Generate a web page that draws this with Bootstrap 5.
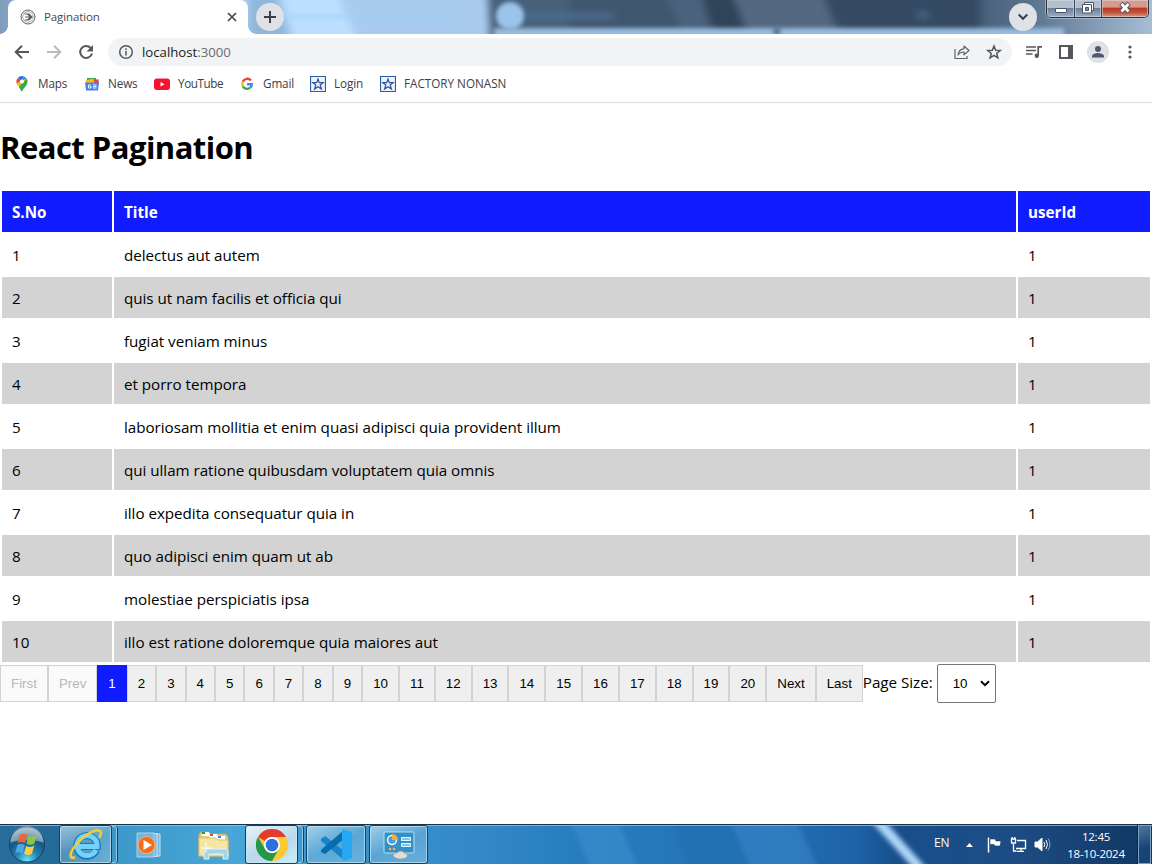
<!DOCTYPE html>
<html lang="en">
<head>
<meta charset="utf-8">
<meta name="viewport" content="width=device-width, initial-scale=1">
<title>Pagination</title>
<link href="https://cdn.jsdelivr.net/npm/bootstrap@5.3.0/dist/css/bootstrap.min.css" rel="stylesheet">
<style>
  body { width: 1152px; height: 864px; overflow: hidden; background: #fff; color: #000; font-family: "Open Sans", "Noto Sans", sans-serif; font-size: 15.2px; line-height: 21px; letter-spacing: -.03px; }
  svg { display: block; flex: none; }
  .strip { height: 34px; }
  .wallpaper { left: 0; top: 0; z-index: -1; }
  .strip, .taskbar { isolation: isolate; }
  .tab { width: 240px; height: 34px; margin-left: 8px; background: #fff; border-radius: 8px 8px 0 0; font-size: 11.5px; letter-spacing: -.12px; color: #45494d; padding: 0 8px 0 12px; }
  .tab::before, .tab::after { content: ""; position: absolute; bottom: 0; width: 8px; height: 8px; }
  .tab::before { left: -8px; background: radial-gradient(circle at 0 0, transparent 7.5px, #fff 8px); }
  .tab::after { right: -8px; background: radial-gradient(circle at 100% 0, transparent 7.5px, #fff 8px); }
  .tab span { margin-top: -2px; }
  .disc { width: 28px; height: 28px; background: #dee1e6; }
  .winbtns { width: 103px; height: 18px; border: 1px solid #29333f; border-top: 0; border-radius: 0 0 5px 5px; box-shadow: 0 0 0 1px #b8cbdf99; overflow: hidden; margin: 0 3px 0 9px; }
  .wb { background: linear-gradient(#b3bfcd 0 45%, #6c7f95 50%, #9db1c6); border-right: 1px solid #39475a; box-shadow: inset 0 0 0 1px #d5dfe988; }
  .wb-close { background: linear-gradient(#d79a8c 0 40%, #b93a20 50%, #c3573b 75%, #dc9882); border-right: 0; }
  .toolbar { height: 36px; padding: 0 6px; }
  .ico { width: 32px; height: 28px; }
  .omni { height: 28px; background: #f1f3f4; margin: 0 6px; padding: 0 2px; font-size: 13.2px; letter-spacing: 0; color: #202124; }
  .omni .port { color: #696d72; }
  .marks { height: 33px; border-bottom: 1px solid #dadce0; padding: 0 0 5px 14px; font-size: 11.7px; letter-spacing: -.1px; color: #3c4043; white-space: nowrap; }
  .marks > div { gap: 8px; }
  .tight { letter-spacing: -.4px; }
  h1 { font-size: 31px; line-height: 43px; font-weight: 700; letter-spacing: -.53px; margin: 23px 0 20px; }
  .grid-tbl { width: 1152px; border-collapse: separate; border-spacing: 2px; table-layout: fixed; margin: 0; }
  .grid-tbl th, .grid-tbl td { padding: 11px 10px 9px; height: 41px; line-height: 21px; }
  .grid-tbl th { background: #101cff; color: #fff; font-size: 15.2px; font-weight: 700; letter-spacing: 0; }
  .grid-tbl tbody tr:nth-child(even) td { background: #d3d3d3; }
  .pager { height: 37px; margin-top: 1px; }
  .pg { font: 13.333px/15px "Liberation Sans", Arial, sans-serif; letter-spacing: 0; padding: 10px; height: 37px; border: 1px solid #d3d3d3; background: #efefef; color: #000; border-radius: 0; }
  .pg:disabled { color: #b8b8b8; background: #fafafa; }
  .pg.current { background: #101cff; border-color: #101cff; color: #fff; }
  .size-label { padding-bottom: 2px; }
  .size-box { width: 59px; height: 39px; border: 1px solid #767676; border-radius: 2px; margin-left: 4px; padding: 0 5px 0 15px; font-size: 13.333px; letter-spacing: 0; font-family: "Liberation Sans", Arial, sans-serif; }
  .taskbar { height: 40px; left: 0; bottom: 0; width: 1152px; padding-top: 1px; }
  .tk { height: 39px; border: 1px solid #153f60; border-radius: 3px; box-shadow: inset 0 0 0 1px #cdeafaa8; background: linear-gradient(155deg, #d5ebf8aa, #8fc3df66 50%, #b3dff466); }
  .stacked { width: 53px; margin-right: 5px; }
  .stacked::after { content: ""; position: absolute; left: 52px; top: 0; width: 5px; height: 37px; border: 1px solid #cdeafa99; border-left: 0; box-shadow: 1px 0 #153f60; border-radius: 0 3px 3px 0; }
  .lit { background: linear-gradient(155deg, #e9f2f8, #b9d8e9 55%, #c9eef8); }
  .tray { color: #fff; font-size: 11.5px; line-height: 17px; letter-spacing: -.25px; }
  .peek { width: 13px; height: 39px; border: 1px solid #7ba0c3; box-shadow: -1px 0 #0b2748; background: linear-gradient(160deg, #7d9fbf99, #164477 60%); }
</style>
<script src="https://cdn.jsdelivr.net/npm/bootstrap@5.3.0/dist/js/bootstrap.bundle.min.js"></script>
</head>
<body class="position-relative">

<header>
  <div class="strip d-flex align-items-center position-relative">
    <svg class="wallpaper position-absolute" width="1152" height="34" viewBox="0 0 1152 34">
      <defs>
        <linearGradient id="sky" x2="1" y2="0"><stop offset="0" stop-color="#7e9dbb"/><stop offset=".05" stop-color="#9fc2e4"/><stop offset=".24" stop-color="#b4d8fa"/><stop offset=".41" stop-color="#a9cdf0"/><stop offset=".43" stop-color="#516b87"/><stop offset=".8" stop-color="#354b64"/><stop offset=".89" stop-color="#58718b"/><stop offset="1" stop-color="#a6bdd4"/></linearGradient>
        <filter id="b3" filterUnits="userSpaceOnUse" x="0" y="-20" width="1152" height="80" color-interpolation-filters="sRGB"><feGaussianBlur stdDeviation="4 2"/></filter>
        <filter id="b2" filterUnits="userSpaceOnUse" x="0" y="-20" width="1152" height="80" color-interpolation-filters="sRGB"><feGaussianBlur stdDeviation="2"/></filter>
      </defs>
      <rect width="1152" height="34" fill="url(#sky)"/>
      <g filter="url(#b3)">
        <path d="M248 -15h26l18 60h-44z" fill="#91b6da"/>
        <path d="M281 -15h50l32 60h-66z" fill="#bcdfff"/>
        <path d="M334 -15h151l5 60h-130z" fill="#a8cbee"/>
        <path d="M492 -15h170l24 60H492z" fill="#48607a"/>
        <path d="M570 -15h90l28 60H570z" fill="#3f566f"/>
        <path d="M662 -15h38l24 60h-38z" fill="#4a627b"/>
        <path d="M698 -15h32l24 60h-36z" fill="#2f4459"/>
        <path d="M728 -15h91l24 60h-91z" fill="#52697f"/>
        <path d="M821 -15h159v60H843z" fill="#344a63"/>
        <path d="M524 11h90v10h-90zM918 10h10v10h-10z" fill="#4d6f8f" opacity=".6"/>
      </g>
      <circle cx="510" cy="16" r="14" fill="#9bc4ec" filter="url(#b2)"/>
      <path d="M494 28h570v16H494z" fill="#98bbdf" filter="url(#b2)"/>
      <path d="M774 27h6v9h-6z" fill="#526f8f" filter="url(#b2)"/>
      <path d="M290 15h160v3H290z" fill="#9fd3f8" filter="url(#b2)"/>
    </svg>
    <div class="tab d-flex align-items-center position-relative">
      <svg width="16" height="16" viewBox="0 0 16 16" fill="none" stroke="#5d6063"><circle cx="8" cy="8" r="7"/><circle cx="8" cy="8" r="5.300" stroke-width=".7" stroke="#888"/><path d="M4.500 5h3l3 3-3 3h-3M5 8h5M7.500 5h1.500l3 3-3 3H7.500" stroke-width="1.200"/></svg>
      <span class="ms-2">Pagination</span>
      <svg class="ms-auto" width="16" height="16" viewBox="0 0 16 16" stroke="#45494d" stroke-width="1.700"><path d="M4 4l8 8M12 4l-8 8"/></svg>
    </div>
    <div class="disc rounded-circle d-flex align-items-center justify-content-center ms-2">
      <svg width="14" height="14" viewBox="0 0 14 14" stroke="#3c4043" stroke-width="2"><path d="M7 1v12M1 7h12"/></svg>
    </div>
    <div class="disc rounded-circle d-flex align-items-center justify-content-center ms-auto">
      <svg width="12" height="8" viewBox="0 0 12 8" fill="none" stroke="#3c4043" stroke-width="2"><path d="M1.700 1.500L6 5.800l4.300-4.300"/></svg>
    </div>
    <div class="winbtns d-flex align-self-start">
      <div class="wb d-flex justify-content-center" style="width:28px"><svg width="28" height="18" viewBox="0 0 28 18"><rect x="8.500" y="8.500" width="11" height="4" rx=".5" fill="#fff" stroke="#4b5567"/></svg></div>
      <div class="wb d-flex justify-content-center" style="width:27px"><svg width="26" height="18" viewBox="0 0 26 18" fill="#fff" stroke="#4b5567"><path d="M9.500 2.500h9v8h-9z"/><path d="M7.500 4.500h9v8.500h-9z"/><path d="M10.500 7.500h3v3h-3z" fill="#8292a5"/></svg></div>
      <div class="wb wb-close flex-fill d-flex justify-content-center"><svg width="26" height="18" viewBox="0 0 26 18"><path d="M9 3.500l8 8.500M17 3.500L9 12" stroke="#5a5060" stroke-width="4.800"/><path d="M9.500 4l7 7.500M16.500 4l-7 7.500" stroke="#fff" stroke-width="2.800"/></svg></div>
    </div>
  </div>

  <div class="toolbar d-flex align-items-center">
    <div class="ico d-flex align-items-center justify-content-center"><svg width="16" height="16" viewBox="0 0 16 16" fill="none" stroke="#54585d" stroke-width="2"><path d="M15 8H2.500M8 1.700L1.700 8 8 14.300"/></svg></div>
    <div class="ico d-flex align-items-center justify-content-center"><svg width="16" height="16" viewBox="0 0 16 16" fill="none" stroke="#babcbe" stroke-width="2"><path d="M1 8h12.500M8 1.700L14.300 8 8 14.300"/></svg></div>
    <div class="ico d-flex align-items-center justify-content-center"><svg width="16" height="16" viewBox="0 0 16 16"><path d="M12.700 4A6 6 0 1 0 14 9.500" fill="none" stroke="#54585d" stroke-width="2"/><path d="M15 1v6.500H8.500z" fill="#54585d"/></svg></div>
    <div class="omni rounded-pill d-flex align-items-center flex-fill">
      <div class="ico d-flex align-items-center justify-content-center"><svg width="16" height="16" viewBox="0 0 16 16" fill="none" stroke="#54585d" stroke-width="1.500"><circle cx="8" cy="8" r="6.300"/><path d="M8 7v4.500M8 4.300v1.600"/></svg></div>
      <span>localhost<span class="port">:3000</span></span>
      <div class="ico d-flex align-items-center justify-content-center ms-auto"><svg width="18" height="16" viewBox="0 0 18 16" fill="none" stroke="#5f6368" stroke-width="1.200"><path d="M2 5v9.500h12V12"/><path d="M5 11c.5-4 2.700-6 6-6.200V2l5 4.500-5 4.300V8c-2.800 0-4.600.8-6 3z" stroke-linejoin="round"/></svg></div>
      <div class="ico d-flex align-items-center justify-content-center"><svg width="16" height="16" viewBox="0 0 16 16" fill="none" stroke="#54585d" stroke-width="1.500"><path d="M8 2l1.700 4.200 4.500.3-3.500 2.900 1.200 4.400L8 11.300l-3.900 2.500 1.200-4.400-3.500-2.900 4.500-.3z"/></svg></div>
    </div>
    <div class="ico d-flex align-items-center justify-content-center"><svg width="16" height="14" viewBox="0 0 16 14" fill="none" stroke="#54585d" stroke-width="1.700"><path d="M0 2h10M0 5.500h10M0 9h6.500M12.200 10.500V1.800H16"/><circle cx="10.800" cy="10.700" r="2.200" fill="#54585d" stroke="none"/></svg></div>
    <div class="ico d-flex align-items-center justify-content-center"><svg width="14" height="14" viewBox="0 0 14 14"><path d="M1 1h12v12H1z" fill="none" stroke="#54585d" stroke-width="2"/><path d="M9 1h4v12H9z" fill="#54585d"/></svg></div>
    <div class="ico d-flex align-items-center justify-content-center"><svg width="22" height="22" viewBox="0 0 22 22"><circle cx="11" cy="11" r="11" fill="#dee1e6"/><g fill="#50596b"><circle cx="11" cy="8" r="3"/><path d="M5 16.500v-1.500c0-2 4-3 6-3s6 1 6 3v1.500z"/></g></svg></div>
    <div class="ico d-flex align-items-center justify-content-center"><svg width="4" height="14" viewBox="0 0 4 14" fill="#54585d"><circle cx="2" cy="2" r="1.600"/><circle cx="2" cy="7" r="1.600"/><circle cx="2" cy="12" r="1.600"/></svg></div>
  </div>

  <div class="marks d-flex align-items-center">
    <div class="d-flex align-items-center" style="width:70px"><svg width="16" height="16" viewBox="0 0 16 16"><path d="M8 0a5.500 5.500 0 0 0-4.200 2l3 2.500L10 .4A6 6 0 0 0 8 0z" fill="#1a73e8"/><path d="M3.800 2A5.500 5.500 0 0 0 3 8l3.700-3.500z" fill="#ea4335"/><path d="M10 .4L5 6.500l2 2 5.500-6A5 5 0 0 0 10 .4z" fill="#4285f4"/><path d="M6 5L3 8.200 5 11l7.800-8.500z" fill="#fbbc04"/><path d="M12.800 2.500L4.800 11 8 16c1-4 5.500-6 5.500-10.500 0-1-.2-2-.7-3z" fill="#34a853"/><circle cx="8" cy="5.500" r="2" fill="#fff"/></svg><span>Maps</span></div>
    <div class="d-flex align-items-center" style="width:70px"><svg width="16" height="16" viewBox="0 0 16 16"><path d="M3 2h9v7H3z" fill="#34a853"/><path d="M8 4l6.500-.8.5 5-7 1z" fill="#ea4335"/><path d="M1.500 4.500l8-2 1 5-8 2z" fill="#fbbc04"/><path d="M1 6.500h14l-1 8H2z" fill="#4285f4"/><path d="M7 9H4.500v3H7v-1.500H6M9 9h3.500M9 10.500h3.500M9 12h3.500" fill="none" stroke="#fff" stroke-width=".9"/></svg><span>News</span></div>
    <div class="d-flex align-items-center" style="width:85px"><svg width="16" height="16" viewBox="0 0 16 16"><rect y="2.500" width="16" height="11.500" rx="3" fill="#f8122f"/><path d="M6.500 6v4.500l4-2.250z" fill="#fff"/></svg><span class="tight">YouTube</span></div>
    <div class="d-flex align-items-center" style="width:71px"><svg width="16" height="16" viewBox="0 0 16 16" fill="none" stroke-width="2.400"><path d="M12 4.500A4.900 4.900 0 0 0 3.800 5.800" stroke="#ea4335"/><path d="M3.800 5.800a5 5 0 0 0 0 4.600" stroke="#fbbc04"/><path d="M3.800 10.400a4.900 4.900 0 0 0 7.400 1.300" stroke="#34a853"/><path d="M11.200 11.700c1.100-1 1.600-2 1.600-3.500H8" stroke="#4285f4"/></svg><span>Gmail</span></div>
    <div class="d-flex align-items-center" style="width:70px"><svg width="16" height="16" viewBox="0 0 16 16" fill="#eef4fc" stroke="#2b5fa5"><path d="M.5.500h15v15H.5z" stroke-width="1.200"/><path d="M8 3l1.300 3.600h3.900L10.200 9l1.200 4L8 10.700 4.600 13l1.200-4-3-2.400h3.900z" stroke="#31519b" stroke-width="1.200"/></svg><span>Login</span></div>
    <div class="d-flex align-items-center"><svg width="16" height="16" viewBox="0 0 16 16" fill="#eef4fc" stroke="#2b5fa5"><path d="M.5.500h15v15H.5z" stroke-width="1.200"/><path d="M8 3l1.300 3.600h3.900L10.200 9l1.200 4L8 10.700 4.600 13l1.200-4-3-2.400h3.900z" stroke="#31519b" stroke-width="1.200"/></svg><span style="letter-spacing:0">FACTORY NONASN</span></div>
  </div>
</header>

<main>
  <h1>React Pagination</h1>
  <table class="grid-tbl">
    <colgroup><col style="width:110px"><col style="width:902px"><col style="width:132px"></colgroup>
    <thead><tr><th>S.No</th><th>Title</th><th>userId</th></tr></thead>
    <tbody>
      <tr><td>1</td><td>delectus aut autem</td><td>1</td></tr>
      <tr><td>2</td><td>quis ut nam facilis et officia qui</td><td>1</td></tr>
      <tr><td>3</td><td>fugiat veniam minus</td><td>1</td></tr>
      <tr><td>4</td><td>et porro tempora</td><td>1</td></tr>
      <tr><td>5</td><td>laboriosam mollitia et enim quasi adipisci quia provident illum</td><td>1</td></tr>
      <tr><td>6</td><td>qui ullam ratione quibusdam voluptatem quia omnis</td><td>1</td></tr>
      <tr><td>7</td><td>illo expedita consequatur quia in</td><td>1</td></tr>
      <tr><td>8</td><td>quo adipisci enim quam ut ab</td><td>1</td></tr>
      <tr><td>9</td><td>molestiae perspiciatis ipsa</td><td>1</td></tr>
      <tr><td>10</td><td>illo est ratione doloremque quia maiores aut</td><td>1</td></tr>
    </tbody>
  </table>
  <div class="pager d-flex align-items-center">
    <button class="pg" disabled>First</button><button class="pg" disabled>Prev</button><button class="pg current">1</button><button class="pg">2</button><button class="pg">3</button><button class="pg">4</button><button class="pg">5</button><button class="pg">6</button><button class="pg">7</button><button class="pg">8</button><button class="pg">9</button><button class="pg">10</button><button class="pg">11</button><button class="pg">12</button><button class="pg">13</button><button class="pg">14</button><button class="pg">15</button><button class="pg">16</button><button class="pg">17</button><button class="pg">18</button><button class="pg">19</button><button class="pg">20</button><button class="pg">Next</button><button class="pg">Last</button>
    <span class="size-label">Page Size:</span>
    <div class="size-box d-flex align-items-center justify-content-between" role="button"><span>10</span><svg width="10" height="7" viewBox="0 0 10 7" fill="none" stroke="#000" stroke-width="2"><path d="M1 1.200l4 4 4-4"/></svg></div>
  </div>
</main>

<footer class="taskbar position-absolute d-flex align-items-start">
  <svg class="wallpaper position-absolute" width="1152" height="40" viewBox="0 0 1152 40">
    <defs>
      <linearGradient id="bar" x2="1" y2="0"><stop offset="0" stop-color="#286d9b"/><stop offset=".05" stop-color="#246a99"/><stop offset=".1" stop-color="#3c98c8"/><stop offset=".2" stop-color="#47a7d9"/><stop offset=".3" stop-color="#3794cc"/><stop offset=".42" stop-color="#3388c6"/><stop offset=".5" stop-color="#267dbf"/><stop offset=".65" stop-color="#2473b6"/><stop offset=".74" stop-color="#1e63a8"/><stop offset=".78" stop-color="#174f8b"/><stop offset=".88" stop-color="#1d4c84"/><stop offset="1" stop-color="#103761"/></linearGradient>
      <filter id="soft" filterUnits="userSpaceOnUse" x="0" y="-20" width="1152" height="90" color-interpolation-filters="sRGB"><feGaussianBlur stdDeviation="2.500"/></filter>
    </defs>
    <rect width="1152" height="40" fill="url(#bar)"/>
    <g filter="url(#soft)">
      <path d="M565 -15h48l30 70h-48z" fill="#3b8dcc" opacity=".7"/>
      <path d="M665 -15h60l32 70h-62z" fill="#206eae" opacity=".5"/>
      <path d="M725 -15h66l32 70h-68z" fill="#3780c4" opacity=".7"/>
      <path d="M860 -15h14l62 70h-13z" fill="#b0d6fa"/>
    </g>
    <path d="M0 .5h1152" stroke="#1b3349"/><path d="M0 1.500h1152" stroke="#a4c8df" stroke-opacity=".7"/>
  </svg>
  <div class="d-flex justify-content-center" style="width:54px">
    <svg width="40" height="39" viewBox="0 0 40 40">
      <defs><radialGradient id="orb" cx=".5" cy=".95" r=".9"><stop offset="0" stop-color="#68e4fa"/><stop offset=".35" stop-color="#2384b5"/><stop offset=".7" stop-color="#185580"/><stop offset="1" stop-color="#7d9eb3"/></radialGradient></defs>
      <circle cx="20" cy="20" r="18" fill="url(#orb)" stroke="#16405f"/>
      <path d="M3 18a17 17 0 0 1 34 0c-10-3-24-3-34 0z" fill="#fff" opacity=".38"/>
      <path d="M12.500 10c2.500-1.500 5-1.500 7.500 0l-2 8.500c-2.500-1.500-5-1.500-7.500 0z" fill="#ed6436"/>
      <path d="M21.500 11c2.500 1.500 5 1.500 8.500-.5l-2.500 8.500c-2.500 1.700-5 1.700-8 0z" fill="#8dc843"/>
      <path d="M10 20.500c2.500-1.500 5-1.500 7.500 0l-2 8.500c-2.500-1.500-5-1.500-7.500 0z" fill="#4ba9e8"/>
      <path d="M19 21.500c2.500 1.500 5 1.500 8.500-.5L25 29.500c-2.500 1.700-5 1.700-8 0z" fill="#fdcd3c"/>
    </svg>
  </div>
  <div class="tk stacked position-relative d-flex align-items-center justify-content-center" style="margin-left:5px">
    <svg width="36" height="36" viewBox="0 0 36 36"><path d="M28.500 23a10.300 10.300 0 1 1 .8-3.500H10" fill="none" stroke="#1878b8" stroke-width="7"/><path d="M28 23a10 10 0 1 1 1-3.500H10" fill="none" stroke="#73d2fa" stroke-width="5"/><path d="M7 30c-6 3-6-4 1-12C16 8 28 1 32 4c2 1.500 1 4-1 7" fill="none" stroke="#f5cb35" stroke-width="2.600"/></svg>
  </div>
  <div class="d-flex align-items-center justify-content-center" style="width:66px;height:39px">
    <svg width="30" height="26" viewBox="0 0 30 26"><path d="M8 2h17v22H8z" fill="#80b8d6" stroke="#bfe1ef"/><path d="M5 1.500h17v23H5z" fill="#77b6d9" stroke="#d1e9f4"/><path d="M2 1h17v24H2z" fill="#78b5da" stroke="#aed3e7"/><circle cx="11.500" cy="13" r="8.500" fill="#f36d1e" stroke="#f9b37c"/><path d="M8.500 8v10l8.500-5z" fill="#fff"/></svg>
  </div>
  <div class="d-flex align-items-center justify-content-center" style="width:62px;height:39px">
    <svg width="34" height="32" viewBox="0 0 34 32"><path d="M2 5l2-2h8l2 2h15l2 3v19H2z" fill="#e8cc7e" stroke="#c3a65c"/><path d="M5 3h7v4H5z" fill="#fff"/><path d="M5 3h3v2H5z" fill="#279b37"/><path d="M12 5h8v4h-8z" fill="#fff"/><path d="M13 5h3v2h-3z" fill="#d34b34"/><path d="M20 7h8v4h-8z" fill="#fff"/><path d="M21 7h3v2h-3z" fill="#3988cf"/><path d="M2 9h17l2 2h10v16H2z" fill="#f6e6a6" stroke="#dabf73"/><path d="M7 30v-7c0-2 1-3 3-3h18c2 0 3 1 3 3v7h-5v-5H12v5z" fill="#9fd4ee" stroke="#e0f3fa"/><path d="M9 13v11M4 19h10" stroke="#fff"/></svg>
  </div>
  <div class="tk lit stacked position-relative d-flex align-items-center justify-content-center" style="margin-right:8px">
    <svg width="32" height="32" viewBox="0 0 32 32"><circle cx="16" cy="16" r="16" fill="#fcc934"/><path d="M2.100 8A16 16 0 0 1 29.900 8H16a8 8 0 0 0-7 4z" fill="#e33b2e"/><path d="M2.100 8A16 16 0 0 0 16 32l7-12a8 8 0 0 1-14 0z" fill="#21984b"/><circle cx="16" cy="16" r="8" fill="#fff"/><circle cx="16" cy="16" r="6.300" fill="#2b70e1"/></svg>
  </div>
  <div class="tk d-flex align-items-center justify-content-center" style="width:60px">
    <svg width="32" height="32" viewBox="0 0 32 32"><path d="M1 10l4-3 19 15v9L1 12z" fill="#1685cc"/><path d="M1 21L24 1v9L5 25l-4-2z" fill="#066daf"/><path d="M23 0l9 3v26l-9 3-1-3V3z" fill="#26a7f2"/></svg>
  </div>
  <div class="tk d-flex align-items-center justify-content-center" style="width:59px;margin-left:3px">
    <svg width="32" height="30" viewBox="0 0 32 30"><rect x="1" y="2" width="30" height="21" rx="1" fill="#368fc7" stroke="#b3e2f8"/><circle cx="9" cy="10" r="4.500" fill="#49a2d6" stroke="#e6f7ff" stroke-width="1.500"/><path d="M9 10V4a6 6 0 0 1 6 6z" fill="#f4af39"/><path d="M18.500 7.500h9v3h-9zM18.500 13.500h9v3h-9z" fill="#78caf0" stroke="#e6f7ff"/><circle cx="7" cy="19" r="1.300" fill="#ffb347"/><circle cx="11" cy="19" r="1.300" fill="#ffb347"/><path d="M10 26c0-3 2-3 4-3 2-3 7-2 7 0 3 0 4 2 3 4-3 3-11 3-14-1z" fill="#ddd" stroke="#999"/></svg>
  </div>
  <div class="tray d-flex align-items-center ms-auto" style="height:39px">
    <span style="width:31px;padding-bottom:5px;font-size:12px">EN</span>
    <svg width="9" height="6" viewBox="0 0 9 6"><path d="M1 5l3.500-4L8 5z" fill="#fff"/></svg>
    <svg style="margin-left:12px" width="17" height="17" viewBox="0 0 17 17"><path d="M2.500 1.500v15" stroke="#fff" stroke-width="1.500"/><path d="M4 3h5l1 2h5l-1 5H9L8 8.500H4z" fill="#fff" stroke="#102d4f" stroke-width=".5"/></svg>
    <svg style="margin-left:7px" width="17" height="17" viewBox="0 0 17 17" fill="none" stroke="#fff" stroke-width="1.300"><path d="M7 4.500h8.500v8H6M11 12.500v2.500M7 15.300h7M3.500 8v7h3"/><path d="M1.500 3h4v4h-4zM2.200 1v2M4.800 1v2"/></svg>
    <svg style="margin-left:7px" width="17" height="17" viewBox="0 0 17 17" fill="none" stroke="#fff"><path d="M1 6h2.500L8 2v13l-4.500-4H1z" fill="#fff"/><path d="M10 6q1.500 2.500 0 5M12 4q3 4.500 0 9" /><path d="M14 2.500q4 6 0 12" opacity=".5"/></svg>
    <div class="text-center" style="width:78px;margin-left:6px">12:45<br>18-10-2024</div>
    <div class="peek" style="margin-left:3px;margin-right:1px"></div>
  </div>
</footer>
</body>
</html>
